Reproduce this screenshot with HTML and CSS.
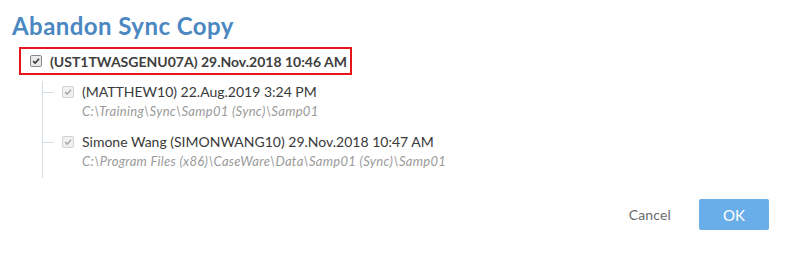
FILE: index.html
```html
<!DOCTYPE html>
<html>
<head>
<meta charset="utf-8">
<link rel="stylesheet" href="styles.css">
</head>
<body>
<div class="dialog">
  <h1 class="title">Abandon Sync Copy</h1>
  <div class="tree">
    <div class="root">
      <span class="cb cb-dark"><svg viewBox="0 0 12 12" width="12" height="12"><path d="M2.6 6.2 L5 8.6 L9.6 3.4" fill="none" stroke="#333" stroke-width="1.9"/></svg></span>
      <span class="root-label">(UST1TWASGENU07A) 29.Nov.2018 10:46 AM</span>
    </div>
    <div class="children">
      <div class="child">
        <span class="cb cb-light"><svg viewBox="0 0 12 12" width="12" height="12"><path d="M2.6 6.2 L5 8.6 L9.6 3.4" fill="none" stroke="#aaa" stroke-width="1.9"/></svg></span>
        <div class="child-text">
          <div class="child-label">(MATTHEW10) 22.Aug.2019 3:24 PM</div>
          <div class="child-path">C:\Training\Sync\Samp01 (Sync)\Samp01</div>
        </div>
      </div>
      <div class="child">
        <span class="cb cb-light"><svg viewBox="0 0 12 12" width="12" height="12"><path d="M2.6 6.2 L5 8.6 L9.6 3.4" fill="none" stroke="#aaa" stroke-width="1.9"/></svg></span>
        <div class="child-text">
          <div class="child-label">Simone Wang (SIMONWANG10) 29.Nov.2018 10:47 AM</div>
          <div class="child-path">C:\Program Files (x86)\CaseWare\Data\Samp01 (Sync)\Samp01</div>
        </div>
      </div>
    </div>
  </div>
  <div class="footer">
    <button class="btn-cancel">Cancel</button>
    <button class="btn-ok">OK</button>
  </div>
</div>
</body>
</html>
```
FILE: styles.css
```css
html, body {
  margin: 0;
  padding: 0;
  background: #fff;
}
body {
  font-family: Lato, "Open Sans", sans-serif;
  color: #333;
}
.dialog {
  width: 790px;
  height: 253px;
  box-sizing: border-box;
  padding: 10px 21px 0 12px;
}
.title {
  margin: 0;
  font-size: 24px;
  font-weight: 700;
  letter-spacing: 0.45px;
  color: #4b87c1;
  line-height: 32px;
}
.tree {
  margin-top: 5px;
}
.root {
  display: inline-flex;
  align-items: center;
  gap: 8px;
  margin-left: 7px;
  padding: 0 3px 0 9px;
  height: 28px;
  box-sizing: border-box;
  border: 2px solid #e8141b;
}
.root-label {
  font-size: 14px;
  font-weight: 700;
  color: #404040;
}
.cb {
  display: inline-flex;
  align-items: center;
  justify-content: center;
  width: 12px;
  height: 12px;
  box-sizing: border-box;
  border-radius: 2px;
  flex: none;
}
.cb svg {
  display: block;
}
.cb-dark {
  border: 1px solid #8a8a8a;
  background: #e9e9e9;
}
.cb-light {
  border: 1px solid #d2d2d2;
  background: #f1f1f1;
}
.children {
  margin-left: 30px;
  margin-top: 6px;
  border-left: 1px solid #d6dde6;
  padding-top: 2px;
  padding-bottom: 6px;
}
.child {
  position: relative;
  display: flex;
  align-items: flex-start;
  gap: 8px;
  padding-left: 19px;
  margin-bottom: 11px;
}
.child:last-child {
  margin-bottom: 0;
}
.child::before {
  content: "";
  position: absolute;
  left: 0;
  top: 9px;
  width: 11px;
  border-top: 1px solid #d6dde6;
}
.cb-light {
  margin-top: 3px;
}
.child-label {
  font-size: 14px;
  color: #3a3a3a;
  line-height: 18px;
}
.child-path {
  font-size: 13px;
  letter-spacing: 0.3px;
  font-style: italic;
  color: #9a9a9a;
  line-height: 21px;
}
.footer {
  display: flex;
  justify-content: flex-end;
  align-items: center;
  margin-top: 21px;
  gap: 28px;
}
.btn-cancel {
  border: none;
  background: none;
  font-family: inherit;
  font-size: 14px;
  letter-spacing: 0.15px;
  color: #6b6b6b;
  padding: 0;
}
.btn-ok {
  border: none;
  border-radius: 2px;
  background: #6aaee9;
  color: #fff;
  font-family: inherit;
  font-size: 15px;
  width: 70px;
  height: 31px;
  padding: 0;
}
```
